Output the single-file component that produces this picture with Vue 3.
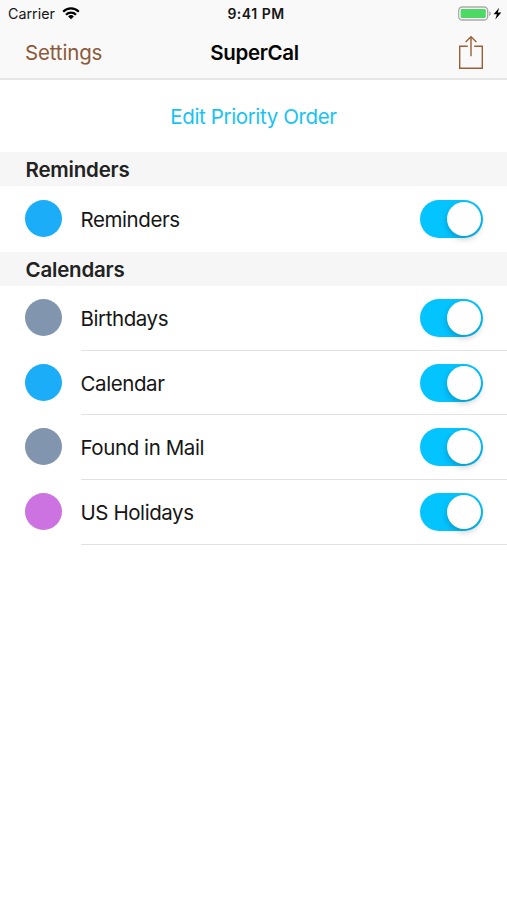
<script setup>
import { ref } from 'vue'

const sections = ref([
  {
    title: 'Reminders',
    items: [{ name: 'Reminders', color: '#1badf8', on: true }],
  },
  {
    title: 'Calendars',
    items: [
      { name: 'Birthdays', color: '#8295af', on: true },
      { name: 'Calendar', color: '#1badf8', on: true },
      { name: 'Found in Mail', color: '#8295af', on: true },
      { name: 'US Holidays', color: '#cc73e1', on: true },
    ],
  },
])
</script>

<template>
  <div class="screen">
    <header class="top">
      <div class="status">
        <div class="carrier">
          <span>Carrier</span>
          <svg class="wifi" width="18" height="13" viewBox="0 0 18 13">
            <g fill="none" stroke="#000" stroke-width="2.2">
              <path d="M1.2 4.7a11 11 0 0 1 15.6 0" />
              <path d="M4 7.7a7.1 7.1 0 0 1 10 0" />
            </g>
            <path d="M9 12.3 6.1 9.5a4.1 4.1 0 0 1 5.8 0z" fill="#000" />
          </svg>
        </div>
        <span class="time">9:41 PM</span>
        <div class="power">
          <svg width="44" height="16" viewBox="0 0 44 16">
            <rect x=".7" y="1" width="29" height="13" rx="3.6" fill="#fff" stroke="#aaa" stroke-width="1.3" />
            <rect x="2.6" y="2.9" width="25.2" height="9.2" rx="1.4" fill="#4cd964" />
            <path d="M31.2 5.2q1.7.7 1.7 2.4t-1.7 2.4z" fill="#aaa" />
            <path d="M41.2 1.8 35.6 8.3h3.3l-1.6 5.3 6-7h-3.5z" fill="#000" />
          </svg>
        </div>
      </div>
      <nav class="nav">
        <span class="back">Settings</span>
        <span class="title">SuperCal</span>
        <svg class="share" width="26" height="35" viewBox="0 0 26 35" fill="none" stroke="#9b6039" stroke-width="1.4">
          <path d="M9.8 11.3H1.7v22h22.6v-22h-8.1" />
          <path d="M13 21.3V1.8M7.6 7.1 13 1.7l5.4 5.4" />
        </svg>
      </nav>
    </header>
    <div class="edit"><span>Edit Priority Order</span></div>
    <section v-for="s in sections" :key="s.title">
      <h2>{{ s.title }}</h2>
      <div v-for="item in s.items" :key="item.name" class="row" :class="{ lined: s.items.length > 1 }">
        <i class="dot" :style="{ background: item.color }"></i>
        <div class="body">
          <span class="name">{{ item.name }}</span>
          <button class="switch" :class="{ on: item.on }" :aria-label="item.name" @click="item.on = !item.on">
            <i class="knob"></i>
          </button>
        </div>
      </div>
    </section>
  </div>
</template>

<style>
body {
  background: #fff;
}
</style>

<style scoped>
.screen {
  height: 900px;
  overflow: hidden;
  background: #fff;
  color: #161616;
  font-family: Inter, 'Liberation Sans', sans-serif;
  font-size: 20.5px;
  letter-spacing: -0.42px;
}
.top {
  box-sizing: border-box;
  height: 80px;
  background: #f9f9f9;
  border-bottom: 2px solid #e6e6e6;
}
.status {
  display: grid;
  grid-template-columns: 1fr auto 1fr;
  align-items: center;
  height: 27px;
  padding: 0 5px 0 8px;
  font-size: 14.3px;
  letter-spacing: 0;
}
.carrier {
  display: flex;
  align-items: center;
  gap: 7px;
}
.time {
  padding-left: 2px;
  font-size: 14px;
  font-weight: 600;
  letter-spacing: 0.5px;
}
.power {
  display: flex;
  justify-content: flex-end;
}
.nav {
  display: grid;
  grid-template-columns: 1fr auto 1fr;
  align-items: center;
  height: 51px;
  padding: 0 23px 0 25px;
}
.back {
  color: #8c5a38;
  letter-spacing: -0.15px;
}
.title {
  color: #050505;
  font-weight: 600;
  letter-spacing: -0.32px;
}
.share {
  justify-self: end;
}
.edit {
  display: flex;
  align-items: center;
  justify-content: center;
  height: 72px;
  color: #17c3f5;
  letter-spacing: -0.37px;
}
h2 {
  margin: 0;
  height: 34px;
  padding: 1px 0 0 25.5px;
  box-sizing: border-box;
  background: #f6f6f6;
  font-size: 20.5px;
  line-height: 34px;
  font-weight: 600;
  letter-spacing: -0.2px;
  color: #222;
}
.row {
  display: flex;
  align-items: center;
  height: 66px;
  padding-left: 25px;
}
.row.lined {
  height: 64.7px;
}
.dot {
  width: 37px;
  height: 37px;
  margin: 0 18.5px 1.5px 0;
  border-radius: 50%;
}
.body {
  flex: 1;
  display: flex;
  align-items: center;
  justify-content: space-between;
  box-sizing: border-box;
  height: 100%;
  padding-right: 24px;
}
.lined .body {
  border-bottom: 1px solid #e2e2e2;
}
.lined .name {
  padding-top: 1px;
}
.switch {
  display: flex;
  width: 63px;
  height: 38px;
  padding: 2px;
  border: 0;
  border-radius: 19px;
  background: #ddd;
}
.switch.on {
  justify-content: flex-end;
  background: #04c4ff;
}
.knob {
  width: 34px;
  height: 34px;
  border-radius: 50%;
  background: #fff;
  box-shadow: 0 3px 6px rgba(0, 0, 0, 0.22);
}
</style>
